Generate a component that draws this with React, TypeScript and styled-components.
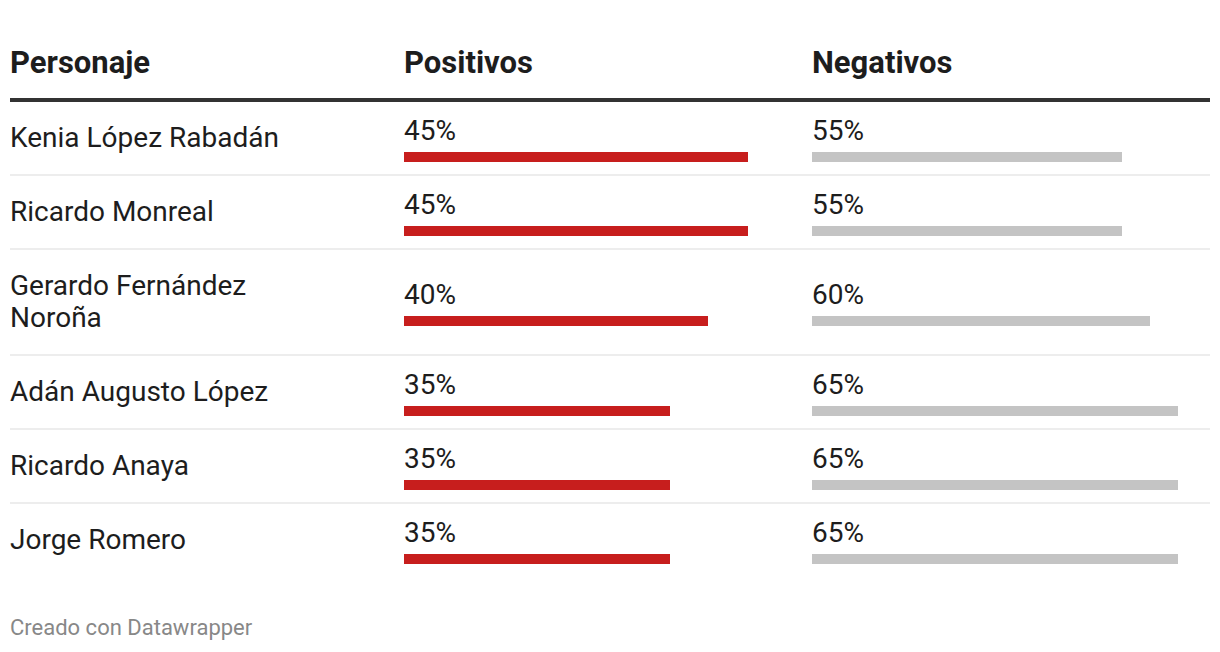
import React, { FC } from 'react';
import styled, { createGlobalStyle } from 'styled-components';

type Row = { name: React.ReactNode; pos: number; neg: number; posBar: number };

// posBar: ancho de la barra roja en px (tal como sale en el gráfico)
const rows: Row[] = [
  { name: 'Kenia López Rabadán', pos: 45, neg: 55, posBar: 344 },
  { name: 'Ricardo Monreal', pos: 45, neg: 55, posBar: 344 },
  { name: <>Gerardo Fernández<br />Noroña</>, pos: 40, neg: 60, posBar: 304 },
  { name: 'Adán Augusto López', pos: 35, neg: 65, posBar: 266 },
  { name: 'Ricardo Anaya', pos: 35, neg: 65, posBar: 266 },
  { name: 'Jorge Romero', pos: 35, neg: 65, posBar: 266 },
];

// px por punto porcentual en la columna de negativos
const NEG_SCALE = 366 / 65;

const App: FC = () => {
  return (
    <Page>
      <GlobalStyle />
      <Table>
        <HeaderRow>
          <HeadCell>Personaje</HeadCell>
          <HeadCell>Positivos</HeadCell>
          <HeadCell>Negativos</HeadCell>
        </HeaderRow>
        {rows.map((r, i) => (
          <BodyRow key={i} $last={i === rows.length - 1}>
            <NameCell>{r.name}</NameCell>
            <BarCell>
              <Value>{r.pos}%</Value>
              <Bar $color="#c71e1d" style={{ width: r.posBar }} />
            </BarCell>
            <BarCell>
              <Value>{r.neg}%</Value>
              <Bar $color="#c4c4c4" style={{ width: Math.round(r.neg * NEG_SCALE) }} />
            </BarCell>
          </BodyRow>
        ))}
      </Table>
      <Footer>Creado con Datawrapper</Footer>
    </Page>
  );
};

const GlobalStyle = createGlobalStyle`
  body {
    margin: 0;
    background: #ffffff;
    font-family: Roboto, "Liberation Sans", sans-serif;
    color: #1d1d1d;
  }
`;

const Page = styled.div`
  width: 1200px;
  padding: 0 10px;
`;

const Table = styled.div`
  display: flex;
  flex-direction: column;
  padding-top: 46px;
`;

const HeaderRow = styled.div`
  display: grid;
  grid-template-columns: 394px 408px 1fr;
  border-bottom: 4px solid #333333;
  padding-bottom: 18px;
`;

const HeadCell = styled.div`
  font-size: 31px;
  font-weight: 700;
  line-height: 34px;
  color: #1d1d1d;
`;

const BodyRow = styled.div<{ $last: boolean }>`
  display: grid;
  grid-template-columns: 394px 408px 1fr;
  align-items: center;
  border-bottom: 2px solid ${(p) => (p.$last ? 'transparent' : '#ededed')};
`;

const NameCell = styled.div`
  padding: 20px 0;
  font-size: 28px;
  line-height: 32px;
  color: #1d1d1d;
`;

const BarCell = styled.div`
  display: flex;
  flex-direction: column;
  align-items: flex-start;
`;

const Value = styled.div`
  font-size: 28px;
  line-height: 32px;
  color: #1d1d1d;
`;

const Bar = styled.div<{ $color: string }>`
  height: 10px;
  margin-top: 5px;
  background: ${(p) => p.$color};
`;

const Footer = styled.div`
  margin-top: 37px;
  font-size: 22px;
  line-height: 26px;
  color: #888888;
`;

export default App;
